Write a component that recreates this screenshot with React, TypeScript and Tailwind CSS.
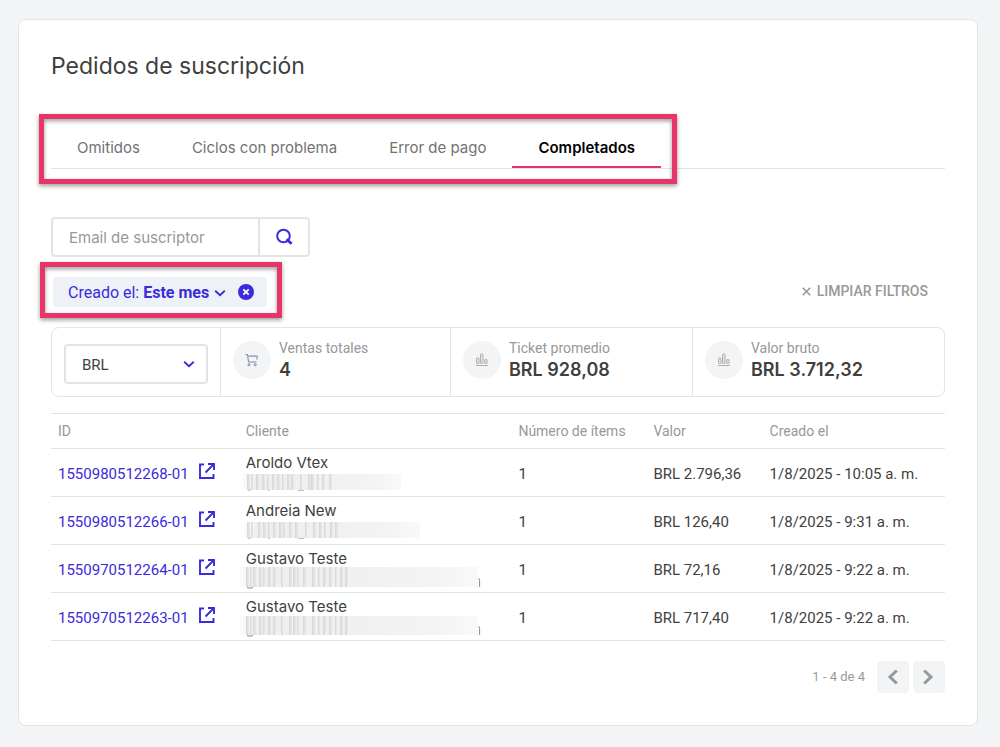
import { useState } from "react";

type Order = {
  id: string;
  client: string;
  items: number;
  value: string;
  date: string;
  mask: { x: number; y: number; w: number; h: number; stripes: number[] };
};

const tabs = ["Omitidos", "Ciclos con problema", "Error de pago", "Completados"];

const gustavoStripes = [0, 4, 7, 13, 17, 22, 27, 35, 43, 47, 51, 57, 66, 72, 77, 83, 89, 94, 99];

const orders: Order[] = [
  {
    id: "1550980512268-01",
    client: "Aroldo Vtex",
    items: 1,
    value: "BRL 2.796,36",
    date: "1/8/2025 - 10:05 a. m.",
    mask: { x: -3, y: 1, w: 158, h: 16, stripes: [1, 5, 10, 16, 21, 26, 31, 36, 41, 45, 54, 62, 65, 71, 76, 83] },
  },
  {
    id: "1550980512266-01",
    client: "Andreia New",
    items: 1,
    value: "BRL 126,40",
    date: "1/8/2025 - 9:31 a. m.",
    mask: { x: -2, y: 1, w: 176, h: 16, stripes: [1, 5, 12, 17, 22, 27, 33, 37, 43, 49, 59, 67, 73, 78, 84, 89] },
  },
  {
    id: "1550970512264-01",
    client: "Gustavo Teste",
    items: 1,
    value: "BRL 72,16",
    date: "1/8/2025 - 9:22 a. m.",
    mask: { x: -6, y: -2, w: 238, h: 20, stripes: gustavoStripes },
  },
  {
    id: "1550970512263-01",
    client: "Gustavo Teste",
    items: 1,
    value: "BRL 717,40",
    date: "1/8/2025 - 9:22 a. m.",
    mask: { x: -6, y: -1, w: 238, h: 19, stripes: gustavoStripes },
  },
];

function HiddenEmail({ mask }: { mask: Order["mask"] }) {
  const bottom = mask.y + mask.h;
  const long = mask.w > 200;
  return (
    <svg width="236" height="20" className="overflow-visible" aria-hidden="true">
      <defs>
        <linearGradient id="fade" x1="0" x2="1">
          <stop offset="0" stopColor="#fbfbfb" />
          <stop offset="0.08" stopColor="#eeeeee" />
          <stop offset="0.45" stopColor="#f0f0f0" />
          <stop offset="0.8" stopColor="#f3f3f3" />
          <stop offset="1" stopColor="#f9f9f9" />
        </linearGradient>
        <linearGradient id="stripe" x1="0" x2="1">
          <stop offset="0" stopColor="#d6d6d6" />
          <stop offset="1" stopColor="#e9e9e9" />
        </linearGradient>
      </defs>
      <rect x={mask.x} y={mask.y} width={mask.w} height={mask.h} fill="url(#fade)" />
      {mask.stripes.map((x, i) => (
        <rect key={x} x={x} y={mask.y} width={i % 3 === 1 ? 2 : 3} height={mask.h} fill="url(#stripe)" />
      ))}
      {long ? (
        <g stroke="#8a8a8a" fill="none">
          <path d={`M1 ${bottom + 0.5}q3 1.5 6 0`} />
          <path d="M232.3 9.500q1.300 0 1.300 2v6.500" />
        </g>
      ) : (
        <path d={`M52 ${bottom + 0.5}h6M2 ${bottom + 0.2}h3M22 ${bottom + 0.2}h2`} stroke="#bdbdbd" />
      )}
    </svg>
  );
}

function Chevron({ className }: { className: string }) {
  return (
    <svg width="12" height="12" viewBox="0 0 12 12" className={className} fill="none" stroke="#3a2bdb" strokeWidth="1.900" aria-hidden="true">
      <path d="M1.200 3.800 6 8.200l4.800-4.400" />
    </svg>
  );
}

function ExternalIcon() {
  return (
    <svg width="18" height="18" viewBox="0 0 18 18" className="mb-[6px]" fill="none" stroke="#3a2bdb" strokeWidth="1.900" aria-hidden="true">
      <path d="M6 2.500H2V16h13.500v-4" />
      <path d="M10 2h6v6M16 2 7.500 10.500" />
    </svg>
  );
}

function CartIcon() {
  return (
    <svg width="14" height="14" viewBox="0 0 14 14" fill="none" stroke="#6f7a96" aria-hidden="true">
      <path d="M.5 1.500h2l1 7.500h8M3 3.500h9.500l-.8 3" strokeWidth=".9" />
      <path d="M3 3h9.500" stroke="#a9b3c4" strokeWidth="1.600" />
      <circle cx="4" cy="11.700" r="1" strokeWidth=".9" />
      <circle cx="10.300" cy="11.700" r="1" strokeWidth=".9" />
    </svg>
  );
}

function ChartIcon() {
  return (
    <svg width="14" height="14" viewBox="0 0 14 14" fill="#e4e4e4" stroke="#b0b0b0" aria-hidden="true">
      <rect x="1.500" y="5" width="2.500" height="5.500" rx=".6" />
      <rect x="5.500" y="1" width="2.500" height="9.500" rx=".6" />
      <rect x="9.800" y="6.500" width="2.200" height="4" rx=".4" />
      <path d="M1 12.500h12" />
    </svg>
  );
}

function Stat({ icon, label, value }: { icon: React.ReactNode; label: string; value: string }) {
  return (
    <div className="flex border-l border-[#e3e4e6] px-3 pt-[9px]">
      <span className="mt-1 mr-2 flex size-[38px] shrink-0 items-center justify-center rounded-full bg-[#f2f4f5]">{icon}</span>
      <dl>
        <dt className="font-['Roboto',sans-serif] text-sm leading-[22px] text-[#979899]">{label}</dt>
        <dd className="text-lg leading-[22px] font-semibold text-[#3f3f40]">{value}</dd>
      </dl>
    </div>
  );
}

const highlight =
  "pointer-events-none absolute border-[5px] border-[#e83468] drop-shadow-[0_2px_2px_rgba(0,0,0,0.4)]";

export default function App() {
  const [active, setActive] = useState("Completados");
  return (
    <div className="min-h-screen bg-[#f2f4f5] pt-[19px] pr-[22px] pb-[21px] pl-[18px] font-['Inter',sans-serif] text-[#3f3f40]">
      <main className="rounded-lg border border-[#e3e4e6] bg-white px-8 pt-[30px] pb-8">
        <h1 className="text-[23px] leading-8">Pedidos de suscripción</h1>

        <div className="mt-11 border-b border-[#e3e4e6]">
          <div className="relative inline-flex align-top">
            <div role="tablist" className="flex">
              {tabs.map((tab) => (
                <button
                  key={tab}
                  role="tab"
                  aria-selected={tab === active}
                  onClick={() => setActive(tab)}
                  className={
                    tab === active
                      ? "h-[42px] border-b-2 border-[#e83468] px-[26px] pt-1 text-[15px] font-semibold text-black"
                      : "h-[42px] border-b-2 border-transparent px-[26px] pt-1 text-[15px] text-[#727273]"
                  }
                >
                  {tab}
                </button>
              ))}
            </div>
            <div className={`${highlight} -top-3 -right-4 -bottom-4 -left-3`} />
          </div>
        </div>

        <form className="mt-12 flex h-10 w-[259px] rounded border-2 border-[#e3e4e6]" onSubmit={(e) => e.preventDefault()}>
          <input
            type="text"
            aria-label="Email de suscriptor"
            placeholder="Email de suscriptor"
            className="min-w-0 flex-1 px-4 pt-[2px] text-[15px] outline-none placeholder:text-[#979899]"
          />
          <button aria-label="Buscar" className="flex w-[50px] items-center justify-center border-l-2 border-[#e3e4e6]">
            <svg width="18" height="18" viewBox="0 0 18 18" fill="none" stroke="#3a2bdb" strokeWidth="2" aria-hidden="true">
              <circle cx="8.500" cy="8" r="6.300" />
              <path d="M11.500 11.200 16.600 15.800" strokeWidth="2.800" />
            </svg>
          </button>
        </form>

        <div className="mt-5 flex items-center justify-between pl-[2px]">
          <div className="relative flex h-[30px] w-[214px] items-center rounded bg-[#eef1f6] pl-[15px] whitespace-nowrap text-[#3a2bdb]">
            <button className="flex items-center pt-[2px] font-['Roboto',sans-serif] text-[16px]">
              <span>
                Creado el: <strong className="font-bold">Este mes</strong>
              </span>
              <Chevron className="ml-[5px]" />
            </button>
            <button aria-label="Quitar filtro" className="ml-auto mr-[13px]">
              <svg width="16" height="16" viewBox="0 0 16 16" aria-hidden="true">
                <circle cx="8" cy="8" r="8" fill="#3a2bdb" />
                <path d="m5.300 5.300 5.400 5.400m0-5.400-5.400 5.400" stroke="#fff" strokeWidth="1.800" />
              </svg>
            </button>
            <div className={`${highlight} -top-[15px] -right-[15px] -bottom-[11px] -left-[13px]`} />
          </div>
          <button className="mr-[17px] flex items-center gap-[6px] pb-[2px] font-['Roboto',sans-serif] text-sm font-medium text-[#979899]">
            <svg width="9" height="9" viewBox="0 0 9 9" stroke="#979899" strokeWidth="1.600" aria-hidden="true">
              <path d="m.8.8 7.400 7.400m0-7.400L.8 8.200" />
            </svg>
            LIMPIAR FILTROS
          </button>
        </div>

        <section className="mt-5 grid h-[70px] grid-cols-[168fr_230fr_242fr_252fr] rounded-lg border border-[#e3e4e6]">
          <div className="relative flex items-center px-3 pt-1">
            <select
              aria-label="Moneda"
              className="h-10 w-full appearance-none rounded border-2 border-[#e3e4e6] bg-white px-4 pt-[2px] font-['Roboto',sans-serif] text-[15px] outline-none"
            >
              <option>BRL</option>
            </select>
            <Chevron className="pointer-events-none absolute right-[25px]" />
          </div>
          <Stat icon={<CartIcon />} label="Ventas totales" value="4" />
          <Stat icon={<ChartIcon />} label="Ticket promedio" value="BRL 928,08" />
          <Stat icon={<ChartIcon />} label="Valor bruto" value="BRL 3.712,32" />
        </section>

        <table className="mt-4 w-full table-fixed border-separate border-spacing-0 text-left font-['Roboto',sans-serif] text-[15px] [&_td]:h-12 [&_td]:border-b [&_td]:border-[#e3e4e6] [&_td]:px-[7px] [&_td]:pb-0 [&_th]:h-9 [&_th]:border-y [&_th]:border-[#e3e4e6] [&_th]:px-[7px] [&_th]:py-0 [&_th]:text-sm [&_th]:font-normal [&_th]:text-[#979899]">
          <colgroup>
            <col className="w-[21%]" />
            <col className="w-[30.500%]" />
            <col className="w-[15.100%]" />
            <col className="w-[13%]" />
            <col />
          </colgroup>
          <thead>
            <tr>
              <th>ID</th>
              <th>Cliente</th>
              <th>Número de ítems</th>
              <th>Valor</th>
              <th>Creado el</th>
            </tr>
          </thead>
          <tbody>
            {orders.map((o) => (
              <tr key={o.id}>
                <td className="pt-[3px]">
                  <a href={`#${o.id}`} className="flex items-center gap-[9px] text-[#3a2bdb]">
                    {o.id}
                    <ExternalIcon />
                  </a>
                </td>
                <td className="pt-0">
                  <div className="font-['Inter',sans-serif] leading-5">{o.client}</div>
                  <HiddenEmail mask={o.mask} />
                </td>
                <td className="pt-[3px]">{o.items}</td>
                <td className="pt-[3px]">{o.value}</td>
                <td className="pt-[3px]">{o.date}</td>
              </tr>
            ))}
          </tbody>
        </table>

        <div className="mt-5 flex items-center justify-end gap-1 font-['Roboto',sans-serif] text-sm text-[#979899]">
          <span className="mr-2 text-[13px]">1 - 4 de 4</span>
          <button aria-label="Anterior" className="flex size-8 items-center justify-center rounded bg-[#f2f4f5]">
            <svg width="16" height="16" viewBox="0 0 16 16" fill="none" stroke="#979899" strokeWidth="3" aria-hidden="true">
              <path d="M11.800 1.500 5 8l6.800 6.500" />
            </svg>
          </button>
          <button aria-label="Siguiente" className="flex size-8 items-center justify-center rounded bg-[#f2f4f5]">
            <svg width="16" height="16" viewBox="0 0 16 16" fill="none" stroke="#979899" strokeWidth="3" aria-hidden="true">
              <path d="M3.200 1.500 10 8l-6.800 6.500" />
            </svg>
          </button>
        </div>
      </main>
    </div>
  );
}
